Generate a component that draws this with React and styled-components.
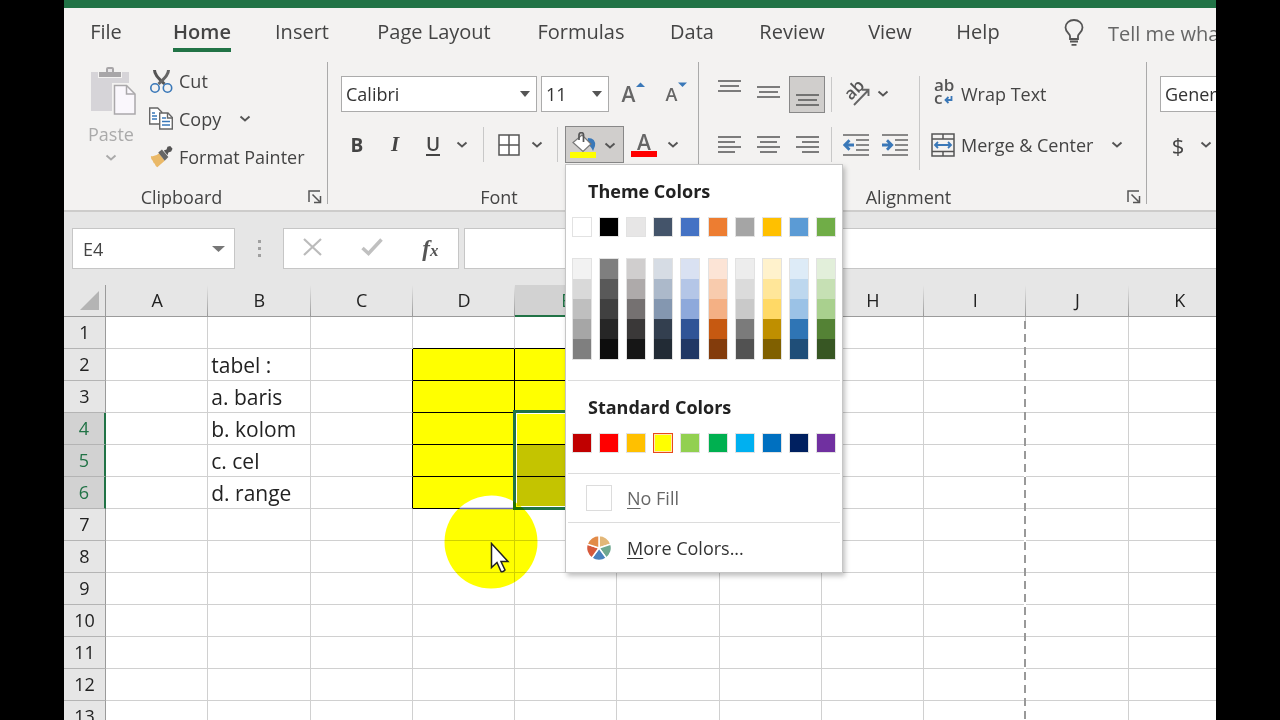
import { useState } from "react";
import styled, { createGlobalStyle, css } from "styled-components";

const ui = `"Open Sans", "Noto Sans", sans-serif`;

const GlobalStyle = createGlobalStyle`
  * {
    box-sizing: border-box;
  }
  body {
    margin: 0;
    background: #000;
    color: #444;
    font-family: ${ui};
    font-size: 18px;
  }
  button, input, select {
    font: inherit;
    color: inherit;
    border: none;
    border-radius: 0;
    padding: 0;
    margin: 0;
    background: none;
  }
`;

const Page = styled.div`
  height: 100vh;
  padding: 0 5%;
  overflow: hidden;
`;

const Window = styled.div`
  height: 100%;
  overflow: hidden;
  background: #fff;
`;

const TitleBar = styled.div`
  height: 8px;
  background: #217346;
`;

const Tabs = styled.nav`
  display: grid;
  grid-template-columns: 84px 108px 92px 172px 122px 100px 100px 96px 80px 1fr;
  height: 52px;
  padding-top: 2px;
  background: #f3f2f1;
`;

const Tab = styled.button`
  justify-self: center;
  align-self: start;
  height: 42px;
  line-height: 44px;
  font-size: 20px;
  white-space: nowrap;
  border-bottom: 4px solid ${(p) => (p.$active ? "#217346" : "transparent")};
  font-weight: ${(p) => (p.$active ? 600 : 400)};
`;

const TellMe = styled.button`
  display: flex;
  align-items: center;
  gap: 24px;
  height: 46px;
  padding-left: 46px;
  font-size: 20px;
  white-space: nowrap;
  color: #666;
`;

const Ribbon = styled.div`
  display: flex;
  height: 150px;
  background: #f3f2f1;
`;

const Group = styled.section`
  flex: none;
  display: flex;
  flex-direction: column;
  min-width: ${(p) => p.$width}px;
`;

const GroupBody = styled.div`
  display: flex;
  height: 124px;
  padding: ${(p) => p.$pad};
`;

const GroupFooter = styled.div`
  display: flex;
  align-items: center;
  height: 26px;
  padding-right: 4px;
`;

const GroupTitle = styled.h2`
  flex: 1;
  margin: 0;
  padding-right: 8px;
  font-size: 18px;
  line-height: 24px;
  font-weight: 400;
  text-align: center;
`;

const Launcher = styled.button`
  display: flex;
  justify-content: center;
  width: 16px;
`;

const GroupDivider = styled.div`
  flex: none;
  width: 1px;
  height: 142px;
  margin-top: 2px;
  background: #aaa;
`;

const Rows = styled.div`
  display: flex;
  flex-direction: column;
  gap: 14px;
`;

const Row = styled.div`
  display: flex;
  align-items: center;
  height: ${(p) => p.$h || 37}px;
  gap: ${(p) => p.$gap || 0}px;
  padding-left: ${(p) => p.$left || 0}px;
`;

const Separator = styled.div`
  flex: none;
  width: 1px;
  height: ${(p) => p.$h || 35}px;
  margin: ${(p) => p.$m};
  background: #c8c8c8;
`;

const IconButton = styled.button`
  flex: none;
  display: flex;
  align-items: center;
  justify-content: center;
  width: ${(p) => p.$w || 36}px;
  height: 37px;
  ${(p) =>
    p.$active &&
    css`
      background: #d0cecc;
      border: 1px solid #888;
    `}
`;

const ArrowButton = styled.button`
  flex: none;
  display: flex;
  align-items: center;
  justify-content: center;
  width: ${(p) => p.$w || 20}px;
  height: 37px;
`;

const LabelButton = styled.button`
  display: flex;
  align-items: center;
  gap: 6px;
  height: 38px;
  white-space: nowrap;

  svg {
    flex: none;
    width: 24px;
  }
`;

const PasteButton = styled.button`
  display: flex;
  flex-direction: column;
  align-items: center;
  width: 60px;
  height: 108px;
  margin-right: 8px;
  line-height: 28px;
  color: #aaa;
`;

const Combo = styled.div`
  display: grid;
  align-items: center;
  width: ${(p) => p.$w}px;
  height: 36px;
  background: #fff;
  border: 1px solid #ababab;
  color: #333;

  select,
  svg {
    grid-area: 1 / 1;
  }
  select {
    appearance: none;
    height: 34px;
    padding-left: 4px;
    outline: none;
  }
  svg {
    justify-self: end;
    margin-right: 6px;
    pointer-events: none;
  }
`;

const Glyph = styled.span`
  font-size: ${(p) => p.$size || 19}px;
  font-weight: ${(p) => p.$weight || 400};
  font-style: ${(p) => (p.$italic ? "italic" : "normal")};
  font-family: ${(p) => (p.$italic ? `"Liberation Serif", serif` : ui)};
  color: ${(p) => p.$color || "#444"};
  ${(p) =>
    p.$underline &&
    css`
      line-height: 20px;
      border-bottom: 2px solid #444;
    `}
`;

const FillSplit = styled.div`
  position: relative;
  display: flex;
  width: 59px;
  height: 37px;
  background: #d0cecc;
  border: 1px solid #888;
`;

const Menu = styled.div`
  position: absolute;
  z-index: 10;
  top: 37px;
  left: -1px;
  width: 278px;
  background: #fff;
  border: 1px solid #c6c6c6;
  box-shadow: 2px 3px 5px rgba(0, 0, 0, 0.25);
  color: #333;
`;

const MenuSection = styled.div`
  margin: 0 2px;
  padding: 0 4px 20px;
  border-bottom: 1px solid #dcdcdc;
`;

const MenuHeading = styled.h3`
  margin: 0;
  padding-left: 16px;
  font-size: 18px;
  line-height: 52px;
  font-weight: 700;
  color: #222;
`;

const Swatches = styled.div`
  display: flex;
  justify-content: space-between;
`;

const Swatch = styled.button`
  display: block;
  width: 20px;
  height: 20px;
  background: ${(p) => p.$color};
  border: 1px solid #e2e2e2;
  ${(p) =>
    p.$selected &&
    css`
      border: 1px solid #e8481c;
      box-shadow: inset 0 0 0 1px #ffe9b0;
    `}
`;

const Shades = styled.div`
  display: flex;
  flex-direction: column;
  width: 20px;
  margin-top: 21px;
  border: 1px solid #e2e2e2;
`;

const Shade = styled.button`
  height: 20px;
  background: ${(p) => p.$color};
`;

const MenuItem = styled.button`
  display: flex;
  align-items: center;
  gap: 15px;
  width: calc(100% - 4px);
  height: 49px;
  margin: 0 2px;
  padding-left: 18px;
  color: ${(p) => (p.$muted ? "#666" : "#333")};
  border-bottom: ${(p) => (p.$line ? "1px solid #dcdcdc" : "none")};

  u {
    text-underline-offset: 3px;
  }
`;

const NoFillBox = styled.span`
  width: 26px;
  height: 26px;
  border: 1px solid #dcdcdc;
`;

const FormulaBar = styled.div`
  display: flex;
  height: 75px;
  padding: 16px 0 0 8px;
  border-top: 2px solid #cdcccb;
  background: #e6e6e6;
`;

const NameBox = styled.div`
  display: flex;
  align-items: center;
  width: 163px;
  height: 41px;
  padding: 0 9px 0 10px;
  background: #fff;
  border: 1px solid #c6c6c6;

  input {
    flex: 1;
    min-width: 0;
    outline: none;
  }
`;

const Dots = styled.div`
  display: flex;
  flex-direction: column;
  justify-content: center;
  align-items: center;
  gap: 4px;
  width: 48px;
  height: 41px;

  i {
    width: 3px;
    height: 3px;
    background: #a0a0a0;
  }
`;

const FormulaTools = styled.div`
  display: flex;
  align-items: center;
  justify-content: space-around;
  width: 176px;
  height: 41px;
  margin-right: 5px;
  background: #fff;
  border: 1px solid #c6c6c6;
`;

const FormulaInput = styled.input`
  flex: 1;
  min-width: 0;
  height: 41px;
  background: #fff;
  border: 1px solid #c6c6c6;
  border-right: none;
`;

const SheetArea = styled.main`
  position: relative;
`;

const Sheet = styled.table`
  width: calc(100% + 15px);
  table-layout: fixed;
  border-collapse: separate;
  border-spacing: 0;
  color: #222;

  tr {
    height: 32px;
  }
  th,
  td {
    padding: 0;
    font-weight: 400;
    line-height: 28px;
    white-space: nowrap;
  }
  th {
    padding-bottom: 1px;
    font-size: 18px;
  }
  td {
    font-size: 21px;
  }
`;

const Corner = styled.th`
  width: 42px;
  background: #e6e6e6;
  border-right: 1px solid #9b9b9b;
  border-bottom: 1px solid #9b9b9b;

  svg {
    display: block;
    margin-left: 16px;
  }
`;

const ColHead = styled.th`
  position: relative;
  background: linear-gradient(#e6e6e6, #999) right / 1px 100% no-repeat
    ${(p) => (p.$active ? "#d2d2d2" : "#e6e6e6")};
  border-bottom: ${(p) => (p.$active ? "2px solid #217346" : "1px solid #9b9b9b")};
  color: ${(p) => (p.$active ? "#217346" : "#222")};
`;

const PageBreak = styled.div`
  position: absolute;
  z-index: 1;
  top: 36px;
  right: 0;
  width: 2px;
  height: 100vh;
  background: repeating-linear-gradient(#999 0 8px, #fff 8px 13px);
`;

const RowHead = styled.th`
  background: ${(p) => (p.$active ? "#d2d2d2" : "#e6e6e6")};
  color: ${(p) => (p.$active ? "#217346" : "#222")};
  border-bottom: 1px solid #b4b4b4;
  border-right: ${(p) => (p.$active ? "2px solid #217346" : "1px solid #9b9b9b")};
`;

const Cell = styled.td`
  position: relative;
  text-align: left;
  text-indent: 3px;
  background: ${(p) => p.$fill || "#fff"};
  border-right: 1px solid ${(p) => (p.$inkRight ? "#000" : "#d0d0d0")};
  border-bottom: 1px solid ${(p) => (p.$inkBottom ? "#000" : "#d0d0d0")};
`;

const Selection = styled.div`
  position: absolute;
  z-index: 1;
  top: -3px;
  left: -2px;
  right: -2px;
  height: 100px;
  border: 3px solid #217346;
  box-shadow: inset 0 0 0 1px #fff;
`;

const ClickHalo = styled.svg`
  position: absolute;
  z-index: 2;
  top: 210px;
  left: 380px;
  mix-blend-mode: multiply;
`;

const HaloCap = styled.svg`
  position: absolute;
  z-index: 2;
  top: 210px;
  left: 380px;
`;

const Pointer = styled.svg`
  position: absolute;
  z-index: 3;
  top: 257px;
  left: 426px;
`;

const Chevron = ({ color = "#555" }) => (
  <svg width="12" height="8" viewBox="0 0 12 8" fill="none" stroke={color} strokeWidth="1.900">
    <path d="M1.500 1.500 6 5.500l4.500-4" />
  </svg>
);

const Triangle = ({ size = 10, color = "#555" }) => (
  <svg width={size} height="6" viewBox="0 0 10 6" preserveAspectRatio="none">
    <path d="M0 0h10L5 6z" fill={color} />
  </svg>
);

const LaunchIcon = () => (
  <svg width="14" height="14" viewBox="0 0 14 14" fill="none" stroke="#555" strokeWidth="1.500">
    <path d="M1 12V1h11M4.500 4.500l7 7M12.500 6v6.500H6" />
  </svg>
);

const BulbIcon = () => (
  <svg width="20" height="28" viewBox="0 0 20 28" fill="none" stroke="#555" strokeWidth="1.800">
    <path d="M6 20v-3c0-2-4.500-4-4.500-8.500a8.500 7.500 0 0 1 17 0C18.500 13 14 15 14 17v3z" />
    <path d="M6 22.500h8M7.500 25.800h5" />
  </svg>
);

const PasteIcon = () => (
  <svg width="46" height="50" viewBox="0 0 46 50">
    <path d="M0 6h38v39H0z" fill="#d6d4d8" />
    <path d="M7 4h24v8H7z" fill="#f3f2f1" />
    <path d="M8 11V6h7V3q0-2 2-2h4q2 0 2 2v3h7v5z" fill="#a8a6a8" />
    <path d="M17 3h4v3h-4z" fill="#e8e6e8" />
    <path d="M21 17h24v32H21z" fill="#f3f2f1" />
    <path d="M23.500 19.500h12l8.500 8.500v20H23.500z" fill="#faf7fc" stroke="#aaa8aa" strokeWidth="1.500" />
    <path d="M35.500 19.500V28H44" fill="none" stroke="#aaa8aa" strokeWidth="1.500" />
  </svg>
);

const CutIcon = () => (
  <svg width="24" height="26" viewBox="0 0 24 26" fill="none">
    <path d="M5.500 2c0 4 2.500 7 10 14" stroke="#555" strokeWidth="3" />
    <path d="M19.500 2c0 4-2.500 7-10 14" stroke="#666" strokeWidth="3" />
    <circle cx="6" cy="20" r="4.200" stroke="#3a78b8" strokeWidth="1.600" />
    <circle cx="18.500" cy="20" r="4.200" stroke="#3a78b8" strokeWidth="1.600" />
  </svg>
);

const CopyIcon = () => (
  <svg width="24" height="24" viewBox="0 0 24 24" fill="#fff" stroke="#666" strokeWidth="1.400">
    <path d="M.7 1h8l4 4v12H.7z" />
    <path d="M3 6h3M3 9h5M3 12h5" stroke="#3a78b8" />
    <path d="M10.700 6h8.300l4.300 4.500V22H10.700z" />
    <path d="M18.500 6v5h5" fill="none" />
    <path d="M13 11h4M13 14.500h8M13 18h8" stroke="#3a78b8" />
  </svg>
);

const BrushIcon = () => (
  <svg width="24" height="24" viewBox="0 0 26 24">
    <path d="M2 11q5 1 9-3l6 8-8 7q-2-1-3-4-1 0-2-3-2-1-2-5z" fill="#eab968" />
    <path d="m10 7 4-3 7 8-4 4z" fill="#666" />
    <path d="m16 5 3-1 1-3 3-.8L25.500 3 24 6l-3 1-1 3z" fill="#555" />
  </svg>
);

const GrowIcon = () => (
  <svg width="11" height="24" viewBox="0 0 11 24">
    <path d="M1 5h9L5.500.5z" fill="#3a78b8" />
  </svg>
);

const ShrinkIcon = () => (
  <svg width="11" height="24" viewBox="0 0 11 24">
    <path d="M1 .5h9L5.500 5z" fill="#3a78b8" />
  </svg>
);

const BordersIcon = () => (
  <svg width="22" height="22" viewBox="0 0 22 22" fill="#fff" stroke="#555" strokeWidth="1.500">
    <path d="M1 1h20v20H1zM11 1v20M1 11h20" />
  </svg>
);

const BucketIcon = () => (
  <svg width="27" height="27" viewBox="0 0 27 27">
    <path d="M18 6q8 0 7 8l-2 5q-2-5-6-7z" fill="#3a78b8" />
    <path d="m12 3 9 9-8 7.500-10-9z" fill="#fff" stroke="#777" strokeWidth="1.200" />
    <path d="M9 8V3q0-2.300 2.300-2.300T13.500 3v7" fill="none" stroke="#555" strokeWidth="1.700" />
    <path d="M0 20h26v6H0z" fill="#ff0" />
  </svg>
);

const FontColorMark = styled.span`
  display: block;
  width: 26px;
  border-bottom: 6px solid #f00;
  font-size: 21px;
  font-weight: 600;
  line-height: 18px;
  color: #666;
`;

const LINES = {
  top: [[0, 23, 1], [2, 21, 6], [0, 23, 11]],
  middle: [[0, 23, 7], [2, 21, 12], [0, 23, 17]],
  bottom: [[0, 23, 15], [2, 21, 20], [0, 23, 25]],
  left: [[0, 23, 6], [0, 17, 11], [0, 23, 16], [0, 17, 21]],
  center: [[0, 23, 6], [3, 20, 11], [0, 23, 16], [3, 20, 21]],
  right: [[0, 23, 6], [6, 23, 11], [0, 23, 16], [6, 23, 21]],
};

const AlignIcon = ({ kind }) => (
  <svg width="23" height="28" viewBox="0 0 23 28" stroke="#555" strokeWidth="1.500">
    {LINES[kind].map(([a, b, y]) => (
      <path key={y} d={`M${a} ${y}H${b}`} />
    ))}
  </svg>
);

const IndentIcon = ({ out }) => (
  <svg width="26" height="22" viewBox="0 0 26 22" fill="none" stroke="#666" strokeWidth="1.600">
    <path d="M0 1h26M13 6h13M13 11h13M13 16h13M0 21h26" />
    <g stroke="#3a78b8" strokeWidth="2.800">
      <path d={out ? "M11 11H2M6.500 6.200 1.800 11l4.700 4.800" : "M0 11h9M5 6.200 9.700 11 5 15.800"} />
    </g>
  </svg>
);

const OrientIcon = () => (
  <svg width="28" height="28" viewBox="0 0 28 28" overflow="visible">
    <text x="9" y="21" transform="rotate(-45 9 21)" fontSize="17" fontWeight="600" fill="#555">
      ab
    </text>
    <path d="M12 25 26 10.500M20 9.800h6.500V16" fill="none" stroke="#666" strokeWidth="1.900" />
  </svg>
);

const WrapIcon = () => (
  <svg width="24" height="28" viewBox="0 0 24 28" overflow="visible">
    <text fontSize="17" fontWeight="600" fill="#555">
      <tspan x="3" y="11">ab</tspan>
      <tspan x="3" y="24">c</tspan>
    </text>
    <path d="M20.500 16v4H15M17.500 17l-3 3 3 3" fill="none" stroke="#3a78b8" strokeWidth="1.800" />
  </svg>
);

const MergeIcon = () => (
  <svg width="24" height="24" viewBox="0 0 24 24" fill="none" stroke="#555" strokeWidth="1.500">
    <path d="M1 1h22v22H1zM1 6h22M1 18.500h22M12 1v5M12 18.500V23" />
    <path d="M4 12h16M7 9l-3 3 3 3M17 9l3 3-3 3" stroke="#3a78b8" strokeWidth="1.800" />
  </svg>
);

const WheelIcon = () => (
  <svg width="26" height="26" viewBox="0 0 26 26" stroke="#fff" strokeWidth="1.500">
    <path d="M13 13V.5a12.500 12.500 0 0 1 11.900 8.600z" fill="#e3b778" />
    <path d="m13 13 11.900-3.900a12.500 12.500 0 0 1-4.600 14z" fill="#6fa890" />
    <path d="m13 13 7.300 10.100a12.500 12.500 0 0 1-14.600 0z" fill="#4a82bd" />
    <path d="M13 13 5.700 23.100a12.500 12.500 0 0 1-4.600-14z" fill="#d65a3c" />
    <path d="M13 13 1.100 9.100A12.500 12.500 0 0 1 13 .5z" fill="#e28b48" />
  </svg>
);

const CancelIcon = () => (
  <svg width="19" height="18" viewBox="0 0 19 18" stroke="#bbb" strokeWidth="2.200">
    <path d="m1 1 17 16M18 1 1 17" />
  </svg>
);

const EnterIcon = () => (
  <svg width="22" height="18" viewBox="0 0 22 18" fill="none" stroke="#c0c0c0" strokeWidth="3.500">
    <path d="m1.500 10 6 5.500L20.500 1.500" />
  </svg>
);

const FxIcon = styled.span`
  display: flex;
  align-items: baseline;
  font: italic 700 23px "Liberation Serif", serif;
  color: #555;

  small {
    font-size: 17px;
  }
`;

const tabs = [
  "File", "Home", "Insert", "Page Layout", "Formulas",
  "Data", "Review", "View", "Help",
];

const themeColors = [
  ["#ffffff", "#f2f2f2", "#d9d9d9", "#bfbfbf", "#a6a6a6", "#7f7f7f"],
  ["#000000", "#7f7f7f", "#595959", "#404040", "#262626", "#0d0d0d"],
  ["#e7e6e6", "#d0cece", "#aeaaaa", "#757171", "#3a3838", "#161616"],
  ["#44546a", "#d6dce4", "#acb9ca", "#8497b0", "#333f4f", "#222b35"],
  ["#4472c4", "#d9e1f2", "#b4c6e7", "#8ea9db", "#305496", "#203764"],
  ["#ed7d31", "#fce4d6", "#f8cbad", "#f4b084", "#c65911", "#833c0c"],
  ["#a5a5a5", "#ededed", "#dbdbdb", "#c9c9c9", "#7b7b7b", "#525252"],
  ["#ffc000", "#fff2cc", "#ffe699", "#ffd966", "#bf8f00", "#806000"],
  ["#5b9bd5", "#ddebf7", "#bdd7ee", "#9bc2e6", "#2f75b5", "#1f4e78"],
  ["#70ad47", "#e2efda", "#c6e0b4", "#a9d08e", "#548235", "#375623"],
];

const standardColors = [
  "#c00000", "#ff0000", "#ffc000", "#ffff00", "#92d050",
  "#00b050", "#00b0f0", "#0070c0", "#002060", "#7030a0",
];

const columns = ["A", "B", "C", "D", "E", "F", "G", "H", "I", "J", "K"];
const rows = Array.from({ length: 13 }, (_, i) => i + 1);
const values = {
  B2: "tabel :",
  B3: "a. baris",
  B4: "b. kolom",
  B5: "c. cel",
  B6: "d. range",
};

const isFilled = (col, row) => (col === "D" || col === "E") && row >= 2 && row <= 6;

const fillOf = (col, row) => {
  if (!isFilled(col, row)) return undefined;
  return col === "E" && row > 4 ? "#c4c400" : "#ffff00";
};

const FillMenu = ({ color, onPick }) => (
  <Menu>
    <MenuSection>
      <MenuHeading>Theme Colors</MenuHeading>
      <Swatches>
        {themeColors.map(([base, ...shades]) => (
          <div key={base}>
            <Swatch $color={base} aria-label={base} onClick={() => onPick(base)} />
            <Shades>
              {shades.map((s) => (
                <Shade key={s} $color={s} aria-label={s} onClick={() => onPick(s)} />
              ))}
            </Shades>
          </div>
        ))}
      </Swatches>
    </MenuSection>
    <MenuSection>
      <MenuHeading>Standard Colors</MenuHeading>
      <Swatches>
        {standardColors.map((c) => (
          <Swatch
            key={c}
            $color={c}
            $selected={c === color}
            aria-label={c}
            onClick={() => onPick(c)}
          />
        ))}
      </Swatches>
    </MenuSection>
    <MenuItem $muted $line>
      <NoFillBox />
      <span><u>N</u>o Fill</span>
    </MenuItem>
    <MenuItem>
      <WheelIcon />
      <span><u>M</u>ore Colors...</span>
    </MenuItem>
  </Menu>
);

const App = () => {
  const [tab, setTab] = useState("Home");
  const [color, setColor] = useState("#ffff00");
  const [name, setName] = useState("E4");

  return (
    <Page>
      <GlobalStyle />
      <Window>
        <TitleBar />
        <Tabs>
          {tabs.map((t) => (
            <Tab key={t} $active={t === tab} onClick={() => setTab(t)}>
              {t}
            </Tab>
          ))}
          <TellMe>
            <BulbIcon />
            Tell me what you want to do
          </TellMe>
        </Tabs>

        <Ribbon>
          <Group $width={263}>
            <GroupBody $pad="2px 0 0 17px">
              <PasteButton aria-label="Paste">
                <Row $h={58} $left={6}><PasteIcon /></Row>
                Paste
                <Row $h={20}><Chevron color="#aaa" /></Row>
              </PasteButton>
              <div>
                <LabelButton><CutIcon />Cut</LabelButton>
                <Row $h={38} $gap={18}>
                  <LabelButton><CopyIcon />Copy</LabelButton>
                  <ArrowButton $w={12} aria-label="Copy options"><Chevron /></ArrowButton>
                </Row>
                <LabelButton><BrushIcon />Format Painter</LabelButton>
              </div>
            </GroupBody>
            <GroupFooter>
              <GroupTitle>Clipboard</GroupTitle>
              <Launcher aria-label="Clipboard settings"><LaunchIcon /></Launcher>
            </GroupFooter>
          </Group>
          <GroupDivider />

          <Group $width={370}>
            <GroupBody $pad="16px 0 0 10px">
              <Rows>
                <Row $h={36} $gap={4} $left={3}>
                  <Combo $w={196}>
                    <select aria-label="Font"><option>Calibri</option></select>
                    <Triangle />
                  </Combo>
                  <Combo $w={68}>
                    <select aria-label="Font size"><option>11</option></select>
                    <Triangle />
                  </Combo>
                  <IconButton $w={42} aria-label="Increase font size">
                    <Glyph $size={21} $weight={600} $color="#666">A</Glyph><GrowIcon />
                  </IconButton>
                  <IconButton aria-label="Decrease font size">
                    <Glyph $size={18} $weight={600} $color="#666">A</Glyph><ShrinkIcon />
                  </IconButton>
                </Row>
                <Row>
                  <IconButton $w={38}><Glyph $weight={700}>B</Glyph></IconButton>
                  <IconButton $w={38}><Glyph $italic $weight={700} $size={21}>I</Glyph></IconButton>
                  <IconButton $w={38}><Glyph $weight={600} $underline>U</Glyph></IconButton>
                  <ArrowButton aria-label="Underline options"><Chevron /></ArrowButton>
                  <Separator $m="0 7px 0 11px" />
                  <IconButton aria-label="Borders"><BordersIcon /></IconButton>
                  <ArrowButton aria-label="Border options"><Chevron /></ArrowButton>
                  <Separator $m="0 7px 0 10px" />
                  <FillSplit>
                    <IconButton $w={34} aria-label="Fill color"><BucketIcon /></IconButton>
                    <ArrowButton aria-label="Fill color options"><Chevron /></ArrowButton>
                    <FillMenu color={color} onPick={setColor} />
                  </FillSplit>
                  <IconButton $w={40}><FontColorMark>A</FontColorMark></IconButton>
                  <ArrowButton $w={18} aria-label="Font color options"><Chevron /></ArrowButton>
                </Row>
              </Rows>
            </GroupBody>
            <GroupFooter>
              <GroupTitle>Font</GroupTitle>
              <Launcher aria-label="Font settings"><LaunchIcon /></Launcher>
            </GroupFooter>
          </Group>
          <GroupDivider />

          <Group $width={447}>
            <GroupBody $pad="16px 0 0 12px">
              <Rows>
                <Row $h={36} $gap={3}>
                  <IconButton aria-label="Top align"><AlignIcon kind="top" /></IconButton>
                  <IconButton aria-label="Middle align"><AlignIcon kind="middle" /></IconButton>
                  <IconButton $active aria-label="Bottom align"><AlignIcon kind="bottom" /></IconButton>
                  <Separator $m="0 3px" />
                  <IconButton aria-label="Orientation"><OrientIcon /></IconButton>
                  <ArrowButton $w={12} aria-label="Orientation options"><Chevron /></ArrowButton>
                </Row>
                <Row $gap={3}>
                  <IconButton aria-label="Align left"><AlignIcon kind="left" /></IconButton>
                  <IconButton aria-label="Center"><AlignIcon kind="center" /></IconButton>
                  <IconButton aria-label="Align right"><AlignIcon kind="right" /></IconButton>
                  <Separator $m="0 3px" />
                  <IconButton aria-label="Decrease indent"><IndentIcon out /></IconButton>
                  <IconButton aria-label="Increase indent"><IndentIcon /></IconButton>
                </Row>
              </Rows>
              <Separator $h={94} $m="0 11px 0 6px" />
              <Rows>
                <Row $h={36}>
                  <LabelButton><WrapIcon />Wrap Text</LabelButton>
                </Row>
                <Row $gap={18}>
                  <LabelButton><MergeIcon />Merge &amp; Center</LabelButton>
                  <ArrowButton $w={12} aria-label="Merge options"><Chevron /></ArrowButton>
                </Row>
              </Rows>
            </GroupBody>
            <GroupFooter>
              <GroupTitle>Alignment</GroupTitle>
              <Launcher aria-label="Alignment settings"><LaunchIcon /></Launcher>
            </GroupFooter>
          </Group>
          <GroupDivider />

          <Group $width={220}>
            <GroupBody $pad="16px 0 0 13px">
              <Rows>
                <Combo $w={196}>
                  <select aria-label="Number format"><option>General</option></select>
                  <Triangle />
                </Combo>
                <Row>
                  <IconButton><Glyph $size={22}>$</Glyph></IconButton>
                  <ArrowButton aria-label="Currency options"><Chevron /></ArrowButton>
                </Row>
              </Rows>
            </GroupBody>
          </Group>
        </Ribbon>

        <FormulaBar>
          <NameBox>
            <input aria-label="Name box" value={name} onChange={(e) => setName(e.target.value)} />
            <Triangle size={13} color="#777" />
          </NameBox>
          <Dots><i /><i /><i /></Dots>
          <FormulaTools>
            <button aria-label="Cancel"><CancelIcon /></button>
            <button aria-label="Enter"><EnterIcon /></button>
            <button aria-label="Insert function"><FxIcon>f<small>x</small></FxIcon></button>
          </FormulaTools>
          <FormulaInput aria-label="Formula" />
        </FormulaBar>

        <SheetArea>
          <Sheet>
            <thead>
              <tr>
                <Corner>
                  <svg width="19" height="19" viewBox="0 0 19 19">
                    <path d="M19 0v19H0z" fill="#b4b4b4" />
                  </svg>
                </Corner>
                {columns.map((c) => (
                  <ColHead key={c} $active={c === "E"}>
                    {c}
                    {c === "I" && <PageBreak />}
                  </ColHead>
                ))}
              </tr>
            </thead>
            <tbody>
              {rows.map((r) => (
                <tr key={r}>
                  <RowHead $active={r >= 4 && r <= 6}>{r}</RowHead>
                  {columns.map((c, i) => (
                    <Cell
                      key={c}
                      $fill={fillOf(c, r)}
                      $inkRight={isFilled(c, r) || isFilled(columns[i + 1], r)}
                      $inkBottom={isFilled(c, r) || isFilled(c, r + 1)}
                    >
                      {values[c + r]}
                      {c + r === "E4" && <Selection />}
                    </Cell>
                  ))}
                </tr>
              ))}
            </tbody>
          </Sheet>
          <ClickHalo width="96" height="96" viewBox="0 0 96 96">
            <circle cx="47" cy="47" r="46.500" fill="#ff0" />
          </ClickHalo>
          <HaloCap width="96" height="96" viewBox="0 0 96 96">
            <path d="M15.500 13A46.500 46.500 0 0 1 69 6V13z" fill="#fff" />
            <path d="M15.500 13.500H69" stroke="#6a6ab0" strokeWidth="1.500" />
          </HaloCap>
          <Pointer width="20" height="32" viewBox="0 0 20 32">
            <path
              d="M1.500 1.500v24l5.500-5 4 9q2 1 4-1.500l-4-8.500h7z"
              fill="#fff"
              stroke="#222"
              strokeWidth="1.500"
            />
          </Pointer>
        </SheetArea>
      </Window>
    </Page>
  );
};

export default App;
